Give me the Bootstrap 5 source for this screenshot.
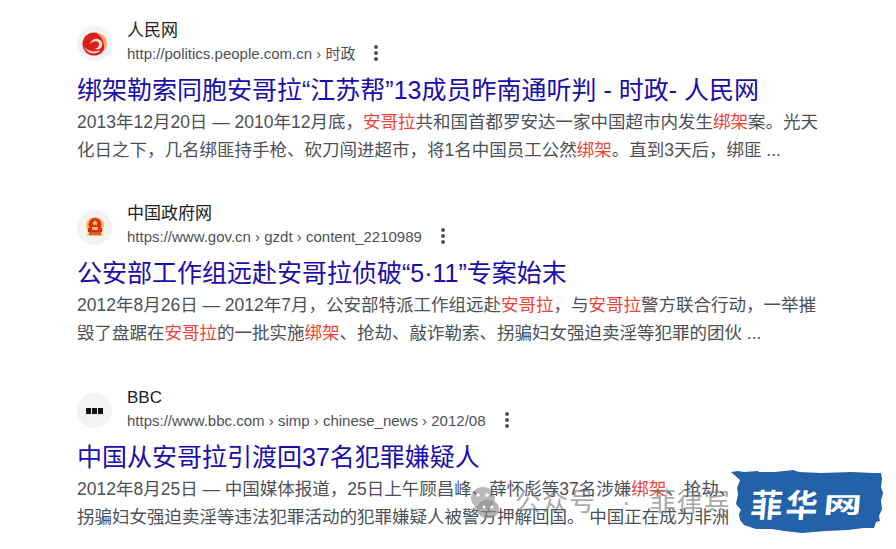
<!DOCTYPE html>
<html lang="zh-CN">
<head>
    <meta charset="UTF-8">
    <meta name="viewport" content="width=device-width, initial-scale=1.0">
    <title>搜索结果</title>
    <link href="https://cdn.jsdelivr.net/npm/bootstrap@5.3.0/dist/css/bootstrap.min.css" rel="stylesheet">
    <style>
        html, body { height: 549px; overflow: hidden; }
        body { background: #fff; font-family: "Liberation Sans", "Noto Sans CJK SC", sans-serif; color: #4d5156; }
        .results { padding: 22.5px 0 0 77px; width: 780px; }
        .result-item { height: 183.5px; }
        .site-icon { width: 35px; height: 35px; background: #f1f3f4; margin-right: 15px; }
        .site-name { font-size: 17px; line-height: 20px; color: #202124; margin-top: -2px; }
        .site-url { font-size: 15px; line-height: 22px; color: #4d5156; margin-top: 2px; white-space: nowrap; }
        .dots { margin-left: 19px; width: 4px; }
        .dots i { display: block; width: 4px; height: 4px; border-radius: 50%; background: #4d5156; margin-bottom: 2px; }
        .result-title { font-size: 25px; line-height: 32px; font-weight: 400; color: #1a0dab; margin: 9px 0 0; white-space: nowrap; }
        .result-text { font-size: 17.5px; line-height: 28px; margin: 2px 0 0; white-space: nowrap; }
        .hl { color: #f0443a; }
        .watermark { position: absolute; left: 470px; top: 483px; display: flex; align-items: center; font-size: 26px; letter-spacing: 1px; color: rgba(110,110,110,.6); white-space: nowrap; }
        .wm-icon { margin-right: 16px; }
        .wm-dot { margin: 0 18px 0 26px; }
        .brand { position: absolute; left: 726px; top: 467px; width: 162px; height: 72px; }
        .brand-name { position: absolute; left: 25px; top: 13px; font-family: "Noto Sans CJK SC", sans-serif; font-weight: 700; font-size: 32px; line-height: 46px; letter-spacing: 3px; color: #fff; white-space: nowrap; transform: skewX(-5deg); }
        .brand-wide { display: inline-block; transform: scale(1.2, .7); margin-left: 6px; }
    </style>
</head>
<body>

<div class="results">

    <div class="result-item">
        <div class="d-flex align-items-center">
            <div class="site-icon rounded-circle d-flex align-items-center justify-content-center flex-shrink-0">
                <svg width="26" height="26" viewBox="0 0 26 26">
                    <circle cx="12" cy="13" r="11.500" fill="#dd1f1a"/>
                    <path d="M14 1.500c6 .5 11 5.500 11 11 0 3-1 5-3 7 1-7-2-14-8-18z" fill="#f4a463"/>
                    <path d="M8 13c1-4 5-6 8-5 3 1 5 4 4 7-1 3-4 4-7 3 3-1 4-3 4-5 0-3-5-4-9 0z" fill="#fbe3d2"/>
                    <path d="M2 15c3 5 10 7 17 4-4 5-14 5-17-4z" fill="#fbd5c5"/>
                </svg>
            </div>
            <div>
                <div class="site-name">人民网</div>
                <div class="d-flex align-items-center site-url">
                    <span>http://politics.people.com.cn › 时政</span>
                    <span class="dots"><i></i><i></i><i></i></span>
                </div>
            </div>
        </div>
        <h3 class="result-title">绑架勒索同胞安哥拉“江苏帮”13成员昨南通听判 - 时政- 人民网</h3>
        <p class="result-text">2013年12月20日 — 2010年12月底，<span class="hl">安哥拉</span>共和国首都罗安达一家中国超市内发生<span class="hl">绑架</span>案。光天<br>化日之下，几名绑匪持手枪、砍刀闯进超市，将1名中国员工公然<span class="hl">绑架</span>。直到3天后，绑匪 ...</p>
    </div>

    <div class="result-item">
        <div class="d-flex align-items-center">
            <div class="site-icon rounded-circle d-flex align-items-center justify-content-center flex-shrink-0">
                <svg width="22" height="22" viewBox="0 0 22 22">
                    <path d="M11 1c5 0 8 3 9 7 0 4-1 6-2 8l1 4H3l1-4C3 14 2 12 2 8c1-4 4-7 9-7z" fill="#f4c65a"/>
                    <circle cx="11" cy="8.500" r="6.500" fill="#dc2a1c"/>
                    <rect x="4" y="12" width="14" height="4" fill="#dc2a1c"/>
                    <path d="M11 3.500l1 2.400 2 .2-1.500 1.500.5 2.200-2-1.200-2 1.200.5-2.200L8 6.100l2-.2z" fill="#f7d35c"/>
                    <rect x="8" y="11" width="6" height="3" fill="#f4c65a"/>
                    <rect x="5" y="16" width="12" height="3" fill="#e2572a"/>
                </svg>
            </div>
            <div>
                <div class="site-name">中国政府网</div>
                <div class="d-flex align-items-center site-url">
                    <span>https://www.gov.cn › gzdt › content_2210989</span>
                    <span class="dots"><i></i><i></i><i></i></span>
                </div>
            </div>
        </div>
        <h3 class="result-title">公安部工作组远赴安哥拉侦破“5·11”专案始末</h3>
        <p class="result-text">2012年8月26日 — 2012年7月，公安部特派工作组远赴<span class="hl">安哥拉</span>，与<span class="hl">安哥拉</span>警方联合行动，一举摧<br>毁了盘踞在<span class="hl">安哥拉</span>的一批实施<span class="hl">绑架</span>、抢劫、敲诈勒索、拐骗妇女强迫卖淫等犯罪的团伙 ...</p>
    </div>

    <div class="result-item">
        <div class="d-flex align-items-center">
            <div class="site-icon rounded-circle d-flex align-items-center justify-content-center flex-shrink-0">
                <svg width="17" height="6" viewBox="0 0 17 6">
                    <rect width="5" height="6" fill="#111"/>
                    <rect x="6" width="5" height="6" fill="#111"/>
                    <rect x="12" width="5" height="6" fill="#111"/>
                </svg>
            </div>
            <div>
                <div class="site-name">BBC</div>
                <div class="d-flex align-items-center site-url">
                    <span>https://www.bbc.com › simp › chinese_news › 2012/08</span>
                    <span class="dots"><i></i><i></i><i></i></span>
                </div>
            </div>
        </div>
        <h3 class="result-title">中国从安哥拉引渡回37名犯罪嫌疑人</h3>
        <p class="result-text">2012年8月25日 — 中国媒体报道，25日上午顾昌峰、薛怀彪等37名涉嫌<span class="hl">绑架</span>、抢劫、<br>拐骗妇女强迫卖淫等违法犯罪活动的犯罪嫌疑人被警方押解回国。 中国正在成为非洲</p>
    </div>

</div>

<!-- watermark over the last snippet -->
<div class="watermark">
    <svg class="wm-icon" width="29" height="34" viewBox="0 0 29 34">
        <ellipse cx="13" cy="12" rx="12" ry="11" fill="rgba(120,120,120,.5)"/>
        <path d="M5 20l-2 6 7-3z" fill="rgba(120,120,120,.5)"/>
        <ellipse cx="18" cy="23" rx="11" ry="9.500" fill="rgba(140,140,140,.65)"/>
        <circle cx="8" cy="9" r="1.800" fill="#fff"/>
        <circle cx="17" cy="9" r="1.800" fill="#fff"/>
        <circle cx="14" cy="21" r="1.500" fill="#fff"/>
        <circle cx="22" cy="21" r="1.500" fill="#fff"/>
    </svg>
    <span>公众号</span><span class="wm-dot">·</span><span>菲律宾</span>
</div>

<div class="brand">
    <svg width="162" height="72" viewBox="0 0 162 72">
        <path d="M5 5 12 4l6 1 14-1 1 1 16 0 18-2 6 2 22 1 30-1 22 1 8 0 1 6-1 8 2 6-2 8 1 8-3 7 1 5-4 1-2 6-10 0-16 2-22 1-24 2-18-2-12-2-16 0-12-4-4-5-1-6 2-4-5-6 2-10-1-6 3-8z" fill="#2362a8"/>
    </svg>
    <span class="brand-name">菲华<span class="brand-wide">网</span></span>
</div>

<script src="https://cdn.jsdelivr.net/npm/bootstrap@5.3.0/dist/js/bootstrap.bundle.min.js"></script>
</body>
</html>
